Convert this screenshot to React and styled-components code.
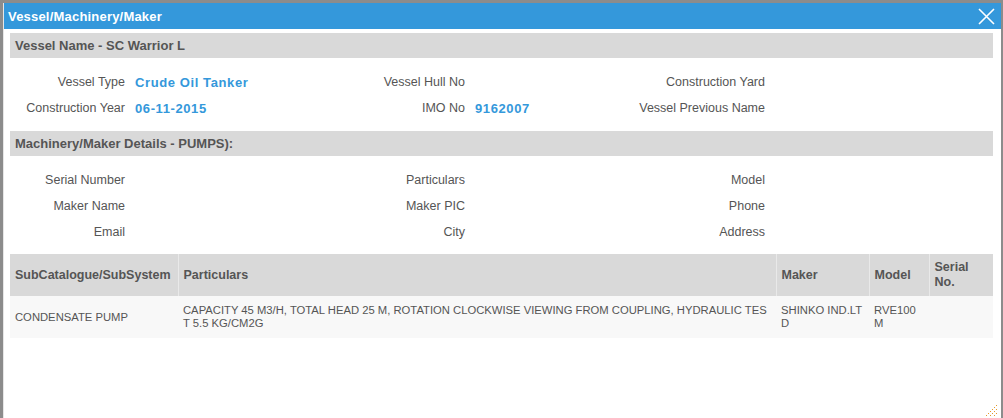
import React from 'react';
import styled, { createGlobalStyle } from 'styled-components';

const Global = createGlobalStyle`
  html, body { margin: 0; padding: 0; height: 100%; }
  body {
    background: #8c8c8c;
    font-family: "Liberation Sans", Arial, sans-serif;
    overflow: hidden;
  }
`;

const Dialog = styled.div`
  margin: 3px 2px 0 3px;
  height: 415px;
  background: #fff;
  border-left: 1px solid #e6e6e6;
  display: flex;
  flex-direction: column;
  position: relative;
`;

const TitleBar = styled.div`
  height: 26px;
  background: #3498db;
  color: #fff;
  display: flex;
  align-items: center;
  justify-content: space-between;
  padding: 0 5px 0 4px;
  font-size: 13px;
  font-weight: bold;
  letter-spacing: 0.2px;
`;

const Close = styled.button`
  border: 0;
  background: none;
  padding: 0;
  width: 20px;
  height: 20px;
  display: flex;
  align-items: center;
  justify-content: center;
  cursor: pointer;
`;

const Body = styled.div`
  padding: 4px 8px 0 6px;
  color: #555;
`;

const SectionHead = styled.div`
  height: 25px;
  background: #d9d9d9;
  display: flex;
  align-items: center;
  padding-left: 5px;
  font-size: 13px;
  font-weight: bold;
  color: #555;
`;

const Fields = styled.div`
  display: grid;
  grid-template-columns: 115px 225px 115px 170px 130px 1fr;
  grid-auto-rows: 26px;
  padding: 11px 0 ${(p) => p.$bottom}px;
  align-items: center;
  font-size: 12.5px;
`;

const Label = styled.div`
  text-align: right;
  white-space: nowrap;
  direction: rtl;
  unicode-bidi: plaintext;
`;

const Value = styled.div`
  padding-left: 10px;
  font-weight: bold;
  font-size: 13px;
  letter-spacing: 0.6px;
  color: #3498db;
`;

const Table = styled.table`
  width: 100%;
  border-collapse: collapse;
  table-layout: fixed;
`;

const Th = styled.th`
  background: #d9d9d9;
  height: 42px;
  padding: 0 5px;
  text-align: left;
  font-size: 12.5px;
  font-weight: bold;
  line-height: 15px;
  color: #555;
  border-left: 1px solid #e9e9e9;
  &:first-child { border-left: 0; }
`;

const Td = styled.td`
  background: #f8f8f8;
  height: 42px;
  padding: 0 5px;
  font-size: 11.25px;
  line-height: 13px;
  color: #555;
  word-break: break-all;
  vertical-align: middle;
`;

const Grip = styled.svg`
  position: absolute;
  right: 3px;
  bottom: 1px;
`;

const vesselFields = [
  ['Vessel Type', 'Crude Oil Tanker', 'Vessel Hull No', '', 'Construction Yard', ''],
  ['Construction Year', '06-11-2015', 'IMO No', '9162007', 'Vessel Previous Name', ''],
];

const makerFields = [
  ['Serial Number', '', 'Particulars', '', 'Model', ''],
  ['Maker Name', '', 'Maker PIC', '', 'Phone', ''],
  ['Email', '', 'City', '', 'Address', ''],
];

const FieldGrid = ({ rows, bottom }) => (
  <Fields $bottom={bottom}>
    {rows.map((r, i) =>
      r.map((t, j) => (j % 2 === 0 ? <Label key={`${i}-${j}`}>{t}</Label> : <Value key={`${i}-${j}`}>{t}</Value>))
    )}
  </Fields>
);

const App = () => (
  <>
    <Global />
    <Dialog>
      <TitleBar>
        <span>Vessel/Machinery/Maker</span>
        <Close aria-label="close">
          <svg width="17" height="17" viewBox="0 0 17 17">
            <path d="M1 1L16 16M16 1L1 16" stroke="#fff" strokeWidth="1.6" />
          </svg>
        </Close>
      </TitleBar>
      <Body>
        <SectionHead>Vessel Name - SC Warrior L</SectionHead>
        <FieldGrid rows={vesselFields} bottom={10} />
        <SectionHead>Machinery/Maker Details - PUMPS):</SectionHead>
        <FieldGrid rows={makerFields} bottom={9} />
        <Table>
          <colgroup>
            <col style={{ width: 168 }} />
            <col style={{ width: 598 }} />
            <col style={{ width: 93 }} />
            <col style={{ width: 60 }} />
            <col />
          </colgroup>
          <thead>
            <tr>
              <Th>SubCatalogue/SubSystem</Th>
              <Th>Particulars</Th>
              <Th>Maker</Th>
              <Th>Model</Th>
              <Th>Serial No.</Th>
            </tr>
          </thead>
          <tbody>
            <tr>
              <Td>CONDENSATE PUMP</Td>
              <Td>CAPACITY 45 M3/H, TOTAL HEAD 25 M, ROTATION CLOCKWISE VIEWING FROM COUPLING, HYDRAULIC TEST 5.5 KG/CM2G</Td>
              <Td>SHINKO IND.LTD</Td>
              <Td>RVE100M</Td>
              <Td></Td>
            </tr>
          </tbody>
        </Table>
      </Body>
      <Grip width="13" height="13" viewBox="0 0 13 13">
        <g fill="#e39a2e">
          {[0, 1, 2, 3, 4, 5].map((k) => (
            <rect key={`a${k}`} x={11 - k * 2} y={1 + k * 2} width="1" height="1" />
          ))}
          {[0, 1, 2, 3].map((k) => (
            <rect key={`b${k}`} x={11 - k * 2} y={5 + k * 2} width="1" height="1" />
          ))}
          {[0, 1].map((k) => (
            <rect key={`c${k}`} x={11 - k * 2} y={9 + k * 2} width="1" height="1" />
          ))}
        </g>
      </Grip>
    </Dialog>
  </>
);

export default App;
